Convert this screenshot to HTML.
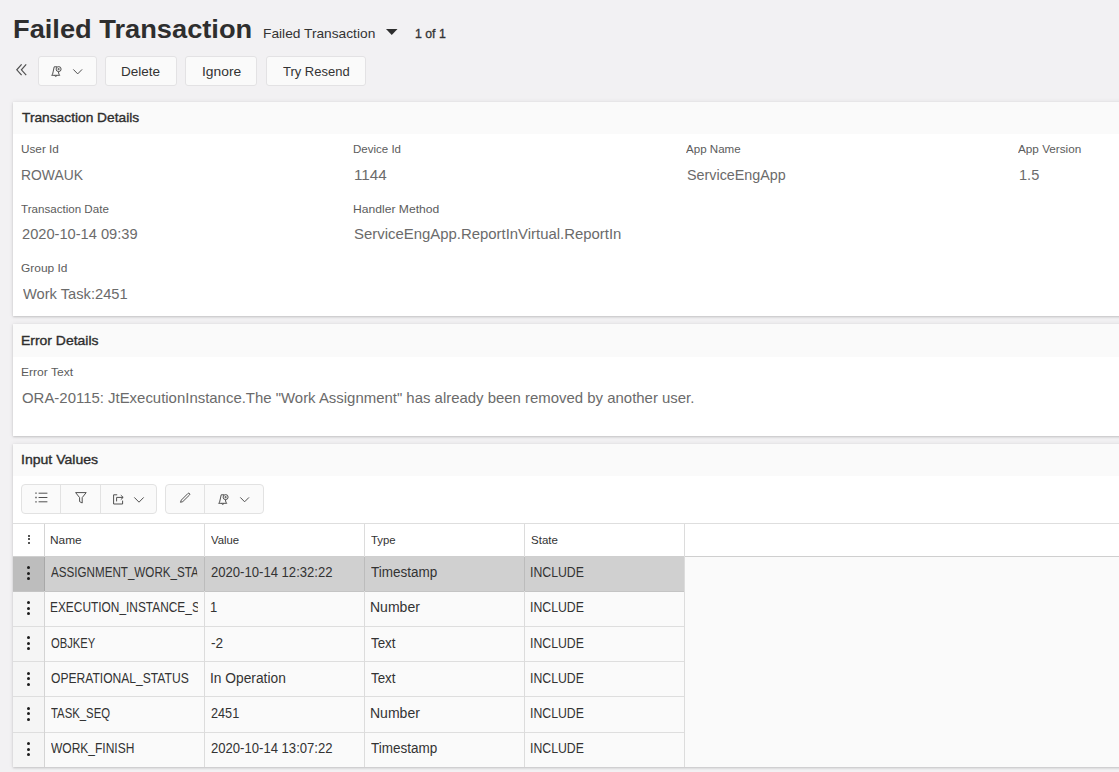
<!DOCTYPE html>
<html lang="en">
<head>
<meta charset="utf-8">
<title>Failed Transaction</title>
<style>
html,body{margin:0;padding:0}
body{width:1119px;height:772px;overflow:hidden;position:relative;background:#f2f1f3;font-family:"Liberation Sans",sans-serif}
.t{position:absolute;white-space:nowrap;margin:0;padding:0;font-weight:400;transform-origin:0 0}
button{padding:0;margin:0;font:inherit;text-align:left;cursor:pointer}
.a{position:absolute}
.card{position:absolute;left:13px;width:1120px;background:#fff;box-shadow:0 1px 2px rgba(0,0,0,.16),0 0 5px rgba(0,0,0,.08)}
.card .hd{position:absolute;left:0;top:0;right:0;height:32px;background:#fafafa}
.btn{position:absolute;background:#fafafa;border-radius:3px;border:1px solid #e3e2e4;box-sizing:border-box}
.grp{position:absolute;background:#fafafa;border:1px solid #e2e2e2;border-radius:4px;box-sizing:border-box}
.grp i{position:absolute;top:0;bottom:0;width:1px;background:#e2e2e2}
svg{position:absolute;overflow:visible}
.hl{position:absolute;height:1px}
.vl{position:absolute;width:1px}
.r b{position:absolute;border-radius:50%;background:#1c1c1c}
</style>
</head>
<body>

<header>
<h1 class="t" style="left:13px;top:12px;font-size:26px;line-height:34px;color:#2e2e2e;transform:scaleX(1.0479);font-weight:700;">Failed Transaction</h1>
<span class="t" style="left:263px;top:24px;font-size:13px;line-height:19px;color:#333;transform:scaleX(1.0570);">Failed Transaction</span>
<span class="t" style="left:415px;top:24px;font-size:13px;line-height:19px;color:#333;transform:scaleX(0.9439);-webkit-text-stroke:0.35px currentColor;">1 of 1</span>
<!-- caret -->
<svg style="left:385.5px;top:29px" width="12" height="6" viewBox="0 0 12 6"><path d="M0 0 H11.5 L5.75 6 Z" fill="#2e2e2e"/></svg>
</header>
<nav>
<!-- top toolbar -->
<svg style="left:16px;top:64px" width="11" height="12" viewBox="0 0 11 12" fill="none" stroke="#505050" stroke-width="1.2"><path d="M5.6 0.4 L0.8 5.8 L5.6 11.2"/><path d="M10.2 0.4 L5.4 5.8 L10.2 11.2"/></svg>
<button class="btn" style="left:38px;top:56px;width:59px;height:30px" aria-label="Subscribe"></button>
<button class="btn" style="left:105px;top:56px;width:72px;height:30px"><span class="t" style="left:15px;top:5px;font-size:13.5px;line-height:19px;color:#333;transform:scaleX(1.0020);">Delete</span></button>
<button class="btn" style="left:185px;top:56px;width:72px;height:30px"><span class="t" style="left:16px;top:5px;font-size:13.5px;line-height:19px;color:#333;transform:scaleX(1.0246);">Ignore</span></button>
<button class="btn" style="left:266px;top:56px;width:100px;height:30px"><span class="t" style="left:16px;top:5px;font-size:13.5px;line-height:19px;color:#333;transform:scaleX(0.9615);">Try Resend</span></button>
<!-- bell -->
<svg style="left:51px;top:66px" width="12" height="12" viewBox="0 0 12 12" fill="none" stroke="#505050" stroke-width="1"><path d="M3.2 0.8 H6 M3.2 0.8 L1.6 8.2 L0.6 9.3 H8.8 L7.9 8.2 L7.4 5.6"/><path d="M3.4 9.5 Q4.7 11.4 6 9.5"/><circle cx="7.6" cy="3.1" r="2.5"/><path d="M7.6 1.9 V4.3 M6.4 3.1 H8.8" stroke-width=".8"/></svg>
<svg style="left:72.8px;top:68.8px" width="10" height="6" viewBox="0 0 10 6" fill="none" stroke="#505050" stroke-width="1"><path d="M0.3 0.4 L4.7 4.9 L9.1 0.4"/></svg>
</nav>

<!-- cards -->
<section>
<div class="card" style="top:102px;height:214px"><div class="hd"></div></div>
<h2 class="t" style="left:22px;top:108px;font-size:13px;line-height:19px;color:#2e2e2e;transform:scaleX(1.0571);-webkit-text-stroke:0.35px currentColor;">Transaction Details</h2>
<label class="t" style="left:21px;top:141px;font-size:11px;line-height:16px;color:#5c5c5c;transform:scaleX(1.0690);">User Id</label>
<label class="t" style="left:353px;top:141px;font-size:11px;line-height:16px;color:#5c5c5c;transform:scaleX(1.0472);">Device Id</label>
<label class="t" style="left:686px;top:141px;font-size:11px;line-height:16px;color:#5c5c5c;transform:scaleX(1.0516);">App Name</label>
<label class="t" style="left:1018px;top:141px;font-size:11px;line-height:16px;color:#5c5c5c;transform:scaleX(1.0664);">App Version</label>
<label class="t" style="left:21px;top:201px;font-size:11px;line-height:16px;color:#5c5c5c;transform:scaleX(1.0536);">Transaction Date</label>
<label class="t" style="left:353px;top:201px;font-size:11px;line-height:16px;color:#5c5c5c;transform:scaleX(1.1019);">Handler Method</label>
<label class="t" style="left:21px;top:260px;font-size:11px;line-height:16px;color:#5c5c5c;transform:scaleX(1.0848);">Group Id</label>
<div class="t" style="left:21px;top:165px;font-size:14.5px;line-height:20px;color:#6b6b6b;transform:scaleX(0.9574);">ROWAUK</div>
<div class="t" style="left:354px;top:165px;font-size:14.5px;line-height:20px;color:#6b6b6b;transform:scaleX(1.0511);">1144</div>
<div class="t" style="left:687px;top:165px;font-size:14.5px;line-height:20px;color:#6b6b6b;transform:scaleX(0.9885);">ServiceEngApp</div>
<div class="t" style="left:1019px;top:165px;font-size:14.5px;line-height:20px;color:#6b6b6b;transform:scaleX(1.0051);">1.5</div>
<div class="t" style="left:22px;top:224px;font-size:14.5px;line-height:20px;color:#6b6b6b;transform:scaleX(1.0097);">2020-10-14 09:39</div>
<div class="t" style="left:354px;top:224px;font-size:14.5px;line-height:20px;color:#6b6b6b;transform:scaleX(1.0280);">ServiceEngApp.ReportInVirtual.ReportIn</div>
<div class="t" style="left:23px;top:284px;font-size:14.5px;line-height:20px;color:#6b6b6b;transform:scaleX(1.0112);">Work Task:2451</div>
</section>
<section>
<div class="card" style="top:324px;height:112px"><div class="hd" style="height:33px"></div></div>
<h2 class="t" style="left:21px;top:331px;font-size:13px;line-height:19px;color:#2e2e2e;transform:scaleX(1.0727);-webkit-text-stroke:0.35px currentColor;">Error Details</h2>
<label class="t" style="left:21px;top:364px;font-size:11px;line-height:16px;color:#5c5c5c;transform:scaleX(1.0979);">Error Text</label>
<div class="t" style="left:22px;top:388px;font-size:14.5px;line-height:20px;color:#6b6b6b;transform:scaleX(1.0298);">ORA-20115: JtExecutionInstance.The &quot;Work Assignment&quot; has already been removed by another user.</div>
</section>
<section>
<div class="card" style="top:444px;height:323px"><div class="hd"></div></div>
<h2 class="t" style="left:21px;top:450px;font-size:13px;line-height:19px;color:#2e2e2e;transform:scaleX(1.0812);-webkit-text-stroke:0.35px currentColor;">Input Values</h2>

<!-- card 3 toolbar -->
<div class="grp" style="left:21px;top:484px;width:136px;height:30px"><i style="left:38px"></i><i style="left:78px"></i></div>
<div class="grp" style="left:165px;top:484px;width:99px;height:30px"><i style="left:38px"></i></div>
<!-- list icon -->
<svg style="left:35px;top:492px" width="13" height="11" viewBox="0 0 13 11" fill="none" stroke="#505050" stroke-width="1"><path d="M3.6 1.2 H12.4 M3.6 5.5 H12.4 M3.6 9.8 H12.4"/><path d="M0.3 1.2 H1.7 M0.3 5.5 H1.7 M0.3 9.8 H1.7" stroke-width="1.3"/></svg>
<!-- funnel -->
<svg style="left:74.5px;top:491.5px" width="12" height="12" viewBox="0 0 12 12" fill="none" stroke="#505050" stroke-width="1"><path d="M0.6 0.6 H11.2 L7.2 5.6 V11 L4.6 9.6 V5.6 Z" stroke-linejoin="round"/></svg>
<!-- export -->
<svg style="left:113px;top:493px" width="11" height="12" viewBox="0 0 11 12" fill="none" stroke="#505050" stroke-width="1"><path d="M4.2 1.8 H0.6 V11 H9.6 V7.6"/><path d="M3.6 8.4 V4.4 H10"/><path d="M7.8 2.2 L10.2 4.4 L7.8 6.6"/></svg>
<svg style="left:134px;top:496.8px" width="10" height="6" viewBox="0 0 10 6" fill="none" stroke="#505050" stroke-width="1"><path d="M0.3 0.4 L5 5.2 L9.7 0.4"/></svg>
<!-- pencil -->
<svg style="left:180px;top:491.6px" width="11" height="11" viewBox="0 0 11 11" fill="none" stroke="#4a4a4a" stroke-width="0.95"><path d="M0.5 10.3 L1.3 8.1 L7.9 1.5 Q8.8 0.8 9.5 1.5 Q10.2 2.3 9.4 3.1 L2.8 9.6 Z" stroke-linejoin="round"/></svg>
<!-- bell -->
<svg style="left:218px;top:494px" width="12" height="12" viewBox="0 0 12 12" fill="none" stroke="#505050" stroke-width="1"><path d="M3.2 0.8 H6 M3.2 0.8 L1.6 8.2 L0.6 9.3 H8.8 L7.9 8.2 L7.4 5.6"/><path d="M3.4 9.5 Q4.7 11.4 6 9.5"/><circle cx="7.6" cy="3.1" r="2.5"/><path d="M7.6 1.9 V4.3 M6.4 3.1 H8.8" stroke-width=".8"/></svg>
<svg style="left:240.2px;top:497.1px" width="10" height="6" viewBox="0 0 10 6" fill="none" stroke="#505050" stroke-width="1"><path d="M0.3 0.4 L4.6 4.8 L9 0.4"/></svg>

<!-- table -->
<div class="a" style="left:13px;top:523px;width:1106px;height:34px;background:#fff"></div>
<div class="a" style="left:13px;top:557px;width:1106px;height:210px;background:#fafafa"></div>
<div class="a" style="left:13px;top:557px;width:31px;height:210px;background:#f5f5f5"></div>
<!-- selected row -->
<div class="a" style="left:13px;top:557px;width:671px;height:34px;background:#d0d0d0"></div>
<div class="a" style="left:13px;top:557px;width:31px;height:34px;background:#bdbdbd"></div>
<!-- horizontal lines -->
<div class="hl" style="left:13px;top:523px;width:1106px;background:#dedede"></div>
<div class="hl" style="left:13px;top:556px;width:1106px;background:#cfcfcf"></div>
<div class="hl" style="left:13px;top:591px;width:672px;background:#c4c4c4"></div>
<div class="hl" style="left:13px;top:626px;width:672px;background:#dedede"></div>
<div class="hl" style="left:13px;top:661px;width:672px;background:#dedede"></div>
<div class="hl" style="left:13px;top:696px;width:672px;background:#dedede"></div>
<div class="hl" style="left:13px;top:732px;width:672px;background:#dedede"></div>
<!-- vertical lines -->
<div class="vl" style="left:44px;top:524px;height:243px;background:#d4d4d4"></div>
<div class="vl" style="left:204px;top:524px;height:243px;background:#dcdcdc"></div>
<div class="vl" style="left:364px;top:524px;height:243px;background:#dcdcdc"></div>
<div class="vl" style="left:524px;top:524px;height:243px;background:#dcdcdc"></div>
<div class="vl" style="left:684px;top:524px;height:243px;background:#dcdcdc"></div>
<div class="vl" style="left:44px;top:557px;height:34px;background:#a8a8a8"></div>
<div class="vl" style="left:204px;top:557px;height:34px;background:#bcbcbc"></div>
<div class="vl" style="left:364px;top:557px;height:34px;background:#bcbcbc"></div>
<div class="vl" style="left:524px;top:557px;height:34px;background:#bcbcbc"></div>
<div role="table">
<div class="r" role="row"><b style="left:27.6px;top:534.6px;width:2px;height:2px"></b><b style="left:27.6px;top:538.4px;width:2px;height:2px"></b><b style="left:27.6px;top:542.2px;width:2px;height:2px"></b>
<div class="t" role="columnheader" style="left:50px;top:532px;font-size:11.5px;line-height:16px;color:#333;transform:scaleX(1.0336);">Name</div>
<div class="t" role="columnheader" style="left:211px;top:532px;font-size:11.5px;line-height:16px;color:#333;transform:scaleX(0.9844);">Value</div>
<div class="t" role="columnheader" style="left:371px;top:532px;font-size:11.5px;line-height:16px;color:#333;transform:scaleX(0.9850);">Type</div>
<div class="t" role="columnheader" style="left:531px;top:532px;font-size:11.5px;line-height:16px;color:#333;transform:scaleX(1.0014);">State</div>
</div>
<div class="r" role="row"><b style="left:27.1px;top:566.0px;width:3px;height:3px"></b><b style="left:27.1px;top:571.5px;width:3px;height:3px"></b><b style="left:27.1px;top:577.0px;width:3px;height:3px"></b>
<div class="t" role="cell" style="left:51px;top:562px;font-size:14px;line-height:20px;color:#333;transform:scaleX(0.8307);width:176.35px;overflow:hidden;">ASSIGNMENT_WORK_START</div>
<div class="t" role="cell" style="left:211px;top:562px;font-size:14px;line-height:20px;color:#333;transform:scaleX(0.9349);">2020-10-14 12:32:22</div>
<div class="t" role="cell" style="left:371px;top:562px;font-size:14px;line-height:20px;color:#333;transform:scaleX(0.9637);">Timestamp</div>
<div class="t" role="cell" style="left:530px;top:562px;font-size:14px;line-height:20px;color:#333;transform:scaleX(0.8771);">INCLUDE</div>
</div>
<div class="r" role="row"><b style="left:27.1px;top:601.2px;width:3px;height:3px"></b><b style="left:27.1px;top:606.7px;width:3px;height:3px"></b><b style="left:27.1px;top:612.2px;width:3px;height:3px"></b>
<div class="t" role="cell" style="left:50px;top:597px;font-size:14px;line-height:20px;color:#333;transform:scaleX(0.8498);width:173.56px;overflow:hidden;">EXECUTION_INSTANCE_SEQ</div>
<div class="t" role="cell" style="left:210px;top:597px;font-size:14px;line-height:20px;color:#333;transform:scaleX(0.9254);">1</div>
<div class="t" role="cell" style="left:370px;top:597px;font-size:14px;line-height:20px;color:#333;transform:scaleX(1.0012);">Number</div>
<div class="t" role="cell" style="left:530px;top:597px;font-size:14px;line-height:20px;color:#333;transform:scaleX(0.8771);">INCLUDE</div>
</div>
<div class="r" role="row"><b style="left:27.1px;top:636.4px;width:3px;height:3px"></b><b style="left:27.1px;top:641.9px;width:3px;height:3px"></b><b style="left:27.1px;top:647.4px;width:3px;height:3px"></b>
<div class="t" role="cell" style="left:51px;top:633px;font-size:14px;line-height:20px;color:#333;transform:scaleX(0.8016);">OBJKEY</div>
<div class="t" role="cell" style="left:211px;top:633px;font-size:14px;line-height:20px;color:#333;transform:scaleX(0.9726);">-2</div>
<div class="t" role="cell" style="left:371px;top:633px;font-size:14px;line-height:20px;color:#333;transform:scaleX(0.9534);">Text</div>
<div class="t" role="cell" style="left:530px;top:633px;font-size:14px;line-height:20px;color:#333;transform:scaleX(0.8771);">INCLUDE</div>
</div>
<div class="r" role="row"><b style="left:27.1px;top:671.6px;width:3px;height:3px"></b><b style="left:27.1px;top:677.1px;width:3px;height:3px"></b><b style="left:27.1px;top:682.6px;width:3px;height:3px"></b>
<div class="t" role="cell" style="left:51px;top:668px;font-size:14px;line-height:20px;color:#333;transform:scaleX(0.8634);">OPERATIONAL_STATUS</div>
<div class="t" role="cell" style="left:210px;top:668px;font-size:14px;line-height:20px;color:#333;transform:scaleX(0.9837);">In Operation</div>
<div class="t" role="cell" style="left:371px;top:668px;font-size:14px;line-height:20px;color:#333;transform:scaleX(0.9534);">Text</div>
<div class="t" role="cell" style="left:530px;top:668px;font-size:14px;line-height:20px;color:#333;transform:scaleX(0.8771);">INCLUDE</div>
</div>
<div class="r" role="row"><b style="left:27.1px;top:706.8px;width:3px;height:3px"></b><b style="left:27.1px;top:712.3px;width:3px;height:3px"></b><b style="left:27.1px;top:717.8px;width:3px;height:3px"></b>
<div class="t" role="cell" style="left:51px;top:703px;font-size:14px;line-height:20px;color:#333;transform:scaleX(0.8107);">TASK_SEQ</div>
<div class="t" role="cell" style="left:211px;top:703px;font-size:14px;line-height:20px;color:#333;transform:scaleX(0.9063);">2451</div>
<div class="t" role="cell" style="left:370px;top:703px;font-size:14px;line-height:20px;color:#333;transform:scaleX(1.0012);">Number</div>
<div class="t" role="cell" style="left:530px;top:703px;font-size:14px;line-height:20px;color:#333;transform:scaleX(0.8771);">INCLUDE</div>
</div>
<div class="r" role="row"><b style="left:27.1px;top:742.0px;width:3px;height:3px"></b><b style="left:27.1px;top:747.5px;width:3px;height:3px"></b><b style="left:27.1px;top:753.0px;width:3px;height:3px"></b>
<div class="t" role="cell" style="left:51px;top:738px;font-size:14px;line-height:20px;color:#333;transform:scaleX(0.8570);">WORK_FINISH</div>
<div class="t" role="cell" style="left:211px;top:738px;font-size:14px;line-height:20px;color:#333;transform:scaleX(0.9349);">2020-10-14 13:07:22</div>
<div class="t" role="cell" style="left:371px;top:738px;font-size:14px;line-height:20px;color:#333;transform:scaleX(0.9637);">Timestamp</div>
<div class="t" role="cell" style="left:530px;top:738px;font-size:14px;line-height:20px;color:#333;transform:scaleX(0.8771);">INCLUDE</div>
</div>
</div>
</section>
</body>
</html>
